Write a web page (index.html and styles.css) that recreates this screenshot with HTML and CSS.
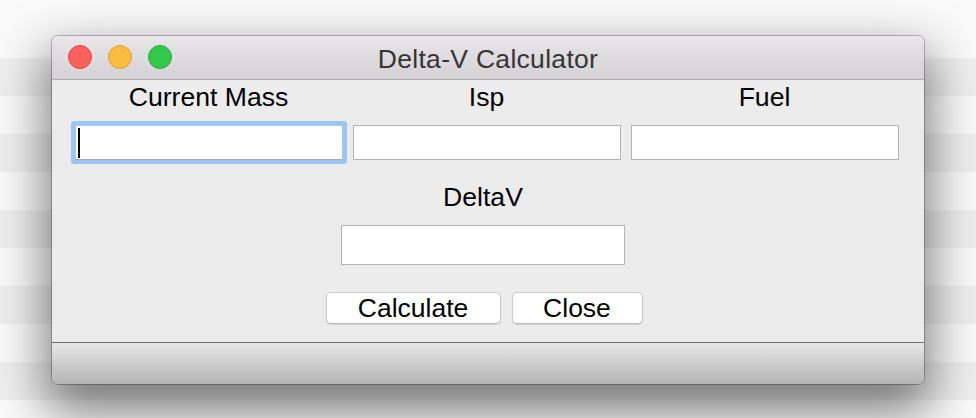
FILE: index.html
```html
<!DOCTYPE html>
<html lang="en">
<head>
<meta charset="utf-8">
<title>Delta-V Calculator</title>
<link rel="stylesheet" href="styles.css">
</head>
<body>
<div class="window">
  <div class="titlebar">
    <div class="lights">
      <span class="light red"></span>
      <span class="light yellow"></span>
      <span class="light green"></span>
    </div>
    <div class="title">Delta-V Calculator</div>
    <div class="spacer"></div>
  </div>
  <div class="content">
    <div class="fields">
      <div class="field">
        <div class="label">Current Mass</div>
        <div class="entry focused"><span class="caret"></span></div>
      </div>
      <div class="field">
        <div class="label">Isp</div>
        <div class="entry"></div>
      </div>
      <div class="field">
        <div class="label">Fuel</div>
        <div class="entry"></div>
      </div>
    </div>
    <div class="result">
      <div class="label">DeltaV</div>
      <div class="entry entry-result"></div>
      <div class="buttons">
        <button class="btn btn-calc" type="button">Calculate</button>
        <button class="btn btn-close" type="button">Close</button>
      </div>
    </div>
  </div>
  <div class="statusbar"></div>
</div>
</body>
</html>
```
FILE: styles.css
```css
* { box-sizing: border-box; }

html, body {
  margin: 0;
  height: 100%;
  overflow: hidden;
}

body {
  font-family: "Liberation Sans", Arial, Helvetica, sans-serif;
  background-color: #efefef;
  background-image: repeating-linear-gradient(to bottom, #fafafa 0 38px, #efefef 38px 76px);
  background-position: 0 20px;
  padding: 36px 0 0 52px;
}

.window {
  width: 872px;
  border-radius: 6px;
  overflow: hidden;
  background: #ececec;
  box-shadow: 0 0 0 1px rgba(0, 0, 0, 0.24), 0 22px 50px 6px rgba(0, 0, 0, 0.5);
}

.titlebar {
  height: 44px;
  display: grid;
  grid-template-columns: 1fr auto 1fr;
  align-items: center;
  background: linear-gradient(to bottom, #e9e7e9, #d3d1d3);
  border-bottom: 1px solid #b0aeb0;
}

.lights {
  display: flex;
  gap: 16px;
  padding-left: 16px;
  padding-bottom: 1px;
}

.light {
  width: 24px;
  height: 24px;
  border-radius: 50%;
  display: block;
}
.red { background: #fc605b; border: 1px solid #e0453f; }
.yellow { background: #fdbc40; border: 1px solid #dfa128; }
.green { background: #34c84a; border: 1px solid #26ad39; }

.title {
  font-size: 26.5px;
  line-height: 30px;
  letter-spacing: 0.3px;
  color: #353535;
  padding-top: 3px;
}

.content {
  padding: 2px 0 18px;
  height: 263px;
  border-bottom: 1px solid #6c6c6c;
}

.fields {
  display: grid;
  grid-template-columns: repeat(3, 268px);
  column-gap: 10px;
  justify-content: center;
  padding-right: 3px;
}

.field {
  display: flex;
  flex-direction: column;
  align-items: center;
}

.label {
  font-size: 26.6px;
  line-height: 30px;
  color: #000;
  text-align: center;
}

.entry {
  width: 268px;
  height: 35px;
  margin-top: 13px;
  background: #fff;
  border: 1px solid #b4b4b4;
  position: relative;
}

.entry.focused {
  border-color: #a6c8ec;
  border-bottom-color: #a9a9a9;
  box-shadow: 0 0 0 4px #9cc6f1;
  border-radius: 1px;
}

.caret {
  position: absolute;
  left: 2px;
  top: 2px;
  width: 2px;
  height: 30px;
  background: #000;
}

.result {
  margin-top: 22px;
  display: flex;
  flex-direction: column;
  align-items: center;
  padding-right: 10px;
}

.entry-result {
  width: 284px;
  height: 40px;
}

.buttons {
  margin-top: 27px;
  display: flex;
  gap: 11px;
  padding-left: 2px;
}

.btn {
  font-family: inherit;
  font-size: 26.5px;
  line-height: 30px;
  height: 32px;
  padding: 0;
  color: #000;
  background: #fff;
  border: 1px solid #cbcbcb;
  border-bottom-color: #b9b9b9;
  border-radius: 5px;
  box-shadow: 0 1px 1px rgba(0, 0, 0, 0.12);
}

.btn-calc { width: 175px; }
.btn-close { width: 131px; }

.statusbar {
  height: 41px;
  background: linear-gradient(to bottom, #e7e7e7, #b4b4b4);
}
```
